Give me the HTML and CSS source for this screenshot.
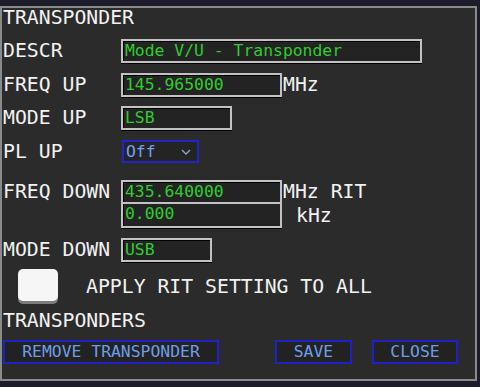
FILE: index.html
```html
<!DOCTYPE html>
<html>
<head>
<meta charset="utf-8">
<link rel="stylesheet" href="styles.css">
</head>
<body>
<div class="dialog">
  <div class="title">TRANSPONDER</div>
  <div class="row r-descr"><span class="label">DESCR</span><span class="field w-descr">Mode V/U - Transponder</span></div>
  <div class="row r-fup"><span class="label">FREQ UP</span><span class="field w-freq">145.965000</span><span class="unit">MHz</span></div>
  <div class="row r-mup"><span class="label">MODE UP</span><span class="field w-mode">LSB</span></div>
  <div class="row r-pl"><span class="label">PL UP</span><span class="select"><span class="sel-text">Off</span><svg class="chev" width="10" height="6" viewBox="0 0 10 6"><polyline points="1,1 5,5 9,1" fill="none" stroke="#8fa6cc" stroke-width="1.3"/></svg></span></div>
  <div class="row r-fdown"><span class="label">FREQ DOWN</span><span class="field w-freq">435.640000</span><span class="unit">MHz RIT</span></div>
  <div class="row r-rit"><span class="label"></span><span class="field w-freq rit">0.000</span><span class="unit khz">kHz</span></div>
  <div class="row r-mdown"><span class="label">MODE DOWN</span><span class="field w-mdown">USB</span></div>
  <div class="row r-check"><span class="checkbox"></span><span class="check-label">APPLY RIT SETTING TO ALL</span></div>
  <div class="title r-trans">TRANSPONDERS</div>
  <div class="buttons">
    <button class="btn b-remove">REMOVE TRANSPONDER</button>
    <button class="btn b-save">SAVE</button>
    <button class="btn b-close">CLOSE</button>
  </div>
</div>
</body>
</html>
```
FILE: styles.css
```css
html, body {
  margin: 0;
  padding: 0;
  background: #1c1c2b;
  width: 480px;
  height: 387px;
  overflow: hidden;
}
body {
  padding-top: 6px;
  box-sizing: border-box;
  font-family: "DejaVu Sans Mono", "Liberation Mono", monospace;
}
.dialog {
  box-sizing: border-box;
  width: 477px;
  height: 375px;
  border: 2px solid #8a8a8a;
  background: #2b2b2b;
  padding-left: 1px;
  display: flex;
  flex-direction: column;
  color: #f2f2f2;
  font-size: 19.8px;
  line-height: 20px;
}
.title {
  height: 20px;
  white-space: nowrap;
}
.row {
  display: flex;
  align-items: center;
  white-space: nowrap;
}
.label {
  width: 118px;
  flex: none;
}
.field {
  box-sizing: border-box;
  height: 24px;
  border: 2px solid #c2c2c2;
  box-shadow: inset 1px 1px 0 #000, 0 1px 0 #000;
  background: #232323;
  color: #2fcc2f;
  font-size: 16.4px;
  line-height: 20px;
  padding-left: 2px;
  flex: none;
}
.w-descr { width: 301px; }
.w-freq { width: 161px; }
.w-mode { width: 111px; }
.w-mdown { width: 91px; }
.unit { margin-left: 1px; }
.khz { margin-left: 14px; }
.r-descr { margin-top: 11px; }
.r-fup { margin-top: 10px; }
.r-mup { margin-top: 9px; }
.r-pl { margin-top: 10px; }
.r-fdown { margin-top: 17px; }
.r-rit { margin-top: 0; }
.rit { border-top-width: 0; box-shadow: inset 1px 0 0 #000, 0 1px 0 #000; }
.r-mdown { margin-top: 10px; }
.select {
  box-sizing: border-box;
  width: 77px;
  height: 23px;
  margin-left: 1px;
  border: 2px solid #2323c8;
  background: #242424;
  display: flex;
  align-items: center;
  padding-left: 2px;
  color: #74a2ec;
  font-size: 16.4px;
}
.sel-text { flex: 1; }
.chev { margin-right: 6px; }
.r-check { margin-top: 7px; }
.checkbox {
  box-sizing: border-box;
  width: 40px;
  height: 32px;
  margin-left: 15px;
  margin-bottom: 3px;
  background: #f6f6f6;
  border-radius: 5px;
  box-shadow: 0 3px 0 #7c7c7c;
  flex: none;
}
.check-label { margin-left: 28px; }
.r-trans { margin-top: 7px; }
.buttons {
  display: flex;
  margin-top: 9px;
}
.btn {
  box-sizing: border-box;
  height: 24px;
  border: 2px solid #2020c8;
  background: #222222;
  color: #6e9ee8;
  font-family: "DejaVu Sans Mono", "Liberation Mono", monospace;
  font-size: 16.4px;
  line-height: 20px;
  padding: 0;
  margin: 0;
  text-align: center;
}
.b-remove { width: 216px; margin-left: 0; }
.b-save { width: 77px; margin-left: 56px; }
.b-close { width: 86px; margin-left: 20px; }
```
